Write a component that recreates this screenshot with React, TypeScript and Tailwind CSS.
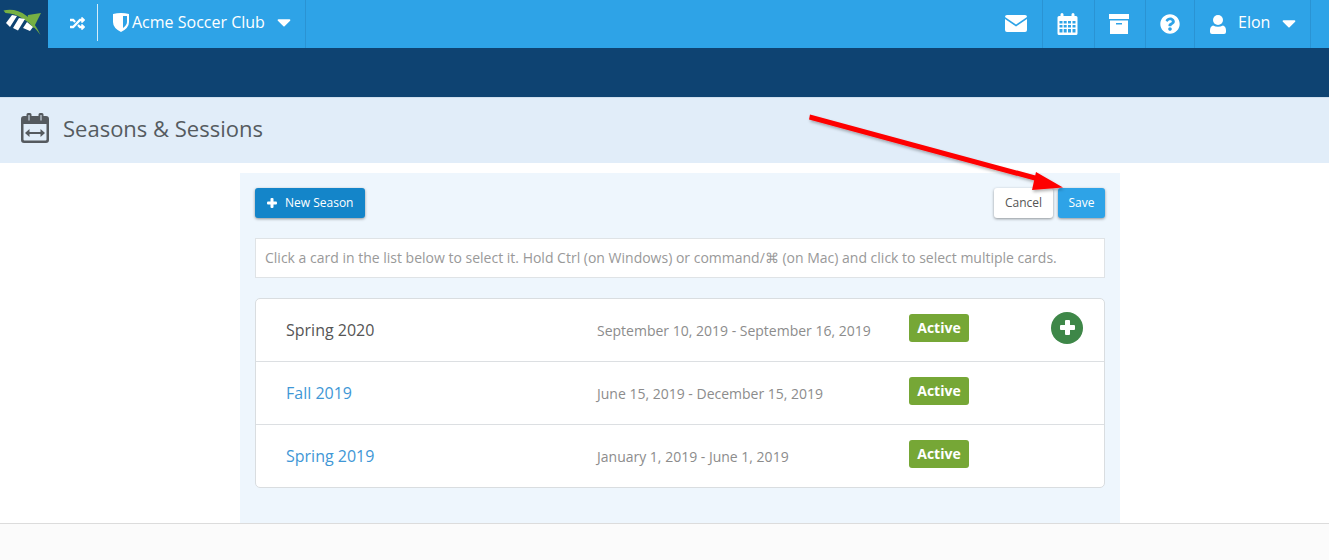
import React from "react";
import { FaRandom, FaCaretDown, FaQuestionCircle } from "react-icons/fa";

const Logo = () => (
  <svg width="48" height="48" viewBox="0 0 48 48">
    <path d="M3.500 10.500 C17 7.500 31 14 40.500 35 C31 22 17 13 5.500 13Z" fill="#76b043" />
    <path d="M28 15 L41 13 L33.500 28 L27 20Z" fill="#76b043" />
    <path d="M6 23 L12 15 L17 16 L10 27Z M13 28 L19 18 L25 19 L18 30.500Z M23 28 L27 22 L33 27 L30 31Z" fill="#fff" />
  </svg>
);

const Shield = () => (
  <svg width="16" height="19" viewBox="0 0 16 19">
    <path d="M0 1 Q8 -1 16 1 L16 9 Q16 15 8 19 Q0 15 0 9Z M10 3 L10 15 Q14 12 14 9 L14 3Z" fill="#fff" fillRule="evenodd" />
  </svg>
);

const Mail = () => (
  <svg width="22" height="17" viewBox="0 0 22 17">
    <path d="M2 0H20Q22 0 22 2L11 9.500L0 2Q0 0 2 0Z" fill="#fff" />
    <path d="M0 4L11 11.500L22 4V15Q22 17 20 17H2Q0 17 0 15Z" fill="#fff" />
  </svg>
);

const CalendarGrid = () => (
  <svg width="21" height="22" viewBox="0 0 20 22">
    <path fillRule="evenodd" fill="#fff" d="M3 3V1.500a1.500 1.500 0 0 1 3 0V3h8V1.500a1.500 1.500 0 0 1 3 0V3h1.500Q20 3 20 4.500v16Q20 22 18.500 22h-17Q0 22 0 20.500v-16Q0 3 1.500 3ZM2 8v2.500h3V8Zm4.200 0v2.500h3V8Zm4.300 0v2.500h3V8Zm4.500 0v2.500h3V8ZM2 12v2.500h3V12Zm4.200 0v2.500h3V12Zm4.300 0v2.500h3V12Zm4.500 0v2.500h3V12ZM2 16v3.500h3V16Zm4.200 0v3.500h3V16Zm4.300 0v3.500h3V16Zm4.500 0v3.500h3V16Z" />
  </svg>
);

const Box = () => (
  <svg width="20" height="20" viewBox="0 0 20 20">
    <path fillRule="evenodd" fill="#fff" d="M0 0H20V5H0ZM1 6.500H19V20H1ZM7 9V10.500H13V9Z" />
  </svg>
);

const User = () => (
  <svg width="16" height="19" viewBox="0 0 16 19">
    <circle cx="8" cy="5" r="5" fill="#fff" />
    <path d="M3 10.500Q8 13 13 10.500Q16 11.500 16 15.500V17Q16 19 14 19H2Q0 19 0 17V15.500Q0 11.500 3 10.500Z" fill="#fff" />
  </svg>
);

const Plus = ({ size, bar }: { size: number; bar: number }) => (
  <svg width={size} height={size} viewBox={`0 0 ${size} ${size}`}>
    <rect x={(size - bar) / 2} y="0" width={bar} height={size} rx="1" fill="#fff" />
    <rect x="0" y={(size - bar) / 2} width={size} height={bar} rx="1" fill="#fff" />
  </svg>
);

const SeasonIcon = () => (
  <svg width="28" height="30" viewBox="0 0 28 30" className="shrink-0">
    <path fillRule="evenodd" fill="#555a5f" d="M3 3H5.500V1.500a1.500 1.500 0 0 1 1.500-1.500h2a1.500 1.500 0 0 1 1.500 1.500V3H17.500V1.500a1.500 1.500 0 0 1 1.500-1.500h2a1.500 1.500 0 0 1 1.500 1.500V3H25Q28 3 28 6V27Q28 30 25 30H3Q0 30 0 27V6Q0 3 3 3ZM7.500 2V7.500H8.500V2ZM19.500 2V7.500H20.500V2ZM2.500 11V26.500Q2.500 27.500 3.500 27.500H24.500Q25.500 27.500 25.500 26.500V11Z" />
    <path d="M4 20L8.500 16V19H19.500V16L24 20L19.500 24V21H8.500V24Z" fill="#555a5f" />
  </svg>
);

const Arrow = () => (
  <svg className="absolute left-[800px] top-[105px] pointer-events-none" width="280" height="95" viewBox="800 105 280 95">
    <defs>
      <filter id="s" x="-5%" y="-20%" width="110%" height="140%">
        <feDropShadow dx="1" dy="2" stdDeviation="1.500" floodColor="#000" floodOpacity="0.3" />
      </filter>
    </defs>
    <g filter="url(#s)" fill="#fe0000">
      <path d="M810 114.500 L1041 177 L1040 182 L809 119.500Z" />
      <path d="M1036 172 L1063 187.500 L1032 190Z" />
    </g>
  </svg>
);

const Cell = ({ children, w }: { children: React.ReactNode; w: string }) => (
  <div className={`flex h-full items-center justify-center border-r border-[#2a93d3] ${w}`}>{children}</div>
);

const rows = [
  { name: "Spring 2020", dates: "September 10, 2019 - September 16, 2019", selected: true },
  { name: "Fall 2019", dates: "June 15, 2019 - December 15, 2019", selected: false },
  { name: "Spring 2019", dates: "January 1, 2019 - June 1, 2019", selected: false },
];

export default function App() {
  return (
    <div className="relative flex h-[560px] flex-col overflow-hidden bg-white font-['Open_Sans',sans-serif]">
      <header className="flex h-12 shrink-0 items-center bg-[#2ea3e7] text-white">
        <div className="flex h-full w-12 items-center justify-center bg-[#0e4372]">
          <Logo />
        </div>
        <div className="flex h-full w-[49px] items-center pl-[22px]">
          <div className="mt-[-1px]"><FaRandom size={15} /></div>
        </div>
        <div className="mb-1 h-[37px] w-px bg-white/80" />
        <div className="flex h-full w-[208px] items-center border-r border-[#2a93d3] pl-[15px]">
          <div className="mb-1 flex items-center">
            <Shield />
            <span className="ml-[3px] text-[16px] leading-none">Acme Soccer Club</span>
            <FaCaretDown size={22} className="ml-[8px] mt-[-1px]" />
          </div>
        </div>
        <div className="flex-1" />
        <div className="flex h-full items-center">
          <Cell w="w-[53px] pb-[1px]"><Mail /></Cell>
          <Cell w="w-[52px] pr-[2px]"><CalendarGrid /></Cell>
          <Cell w="w-[51px] pr-[2px]"><Box /></Cell>
          <Cell w="w-[49px]"><FaQuestionCircle size={20} /></Cell>
          <div className="flex h-full w-[116px] items-center border-r border-[#2a93d3] pl-[15px]">
            <User />
            <span className="mb-[4px] ml-[12px] text-[16px]">Elon</span>
            <FaCaretDown size={22} className="mb-[3px] ml-[8px]" />
          </div>
        </div>
        <div className="w-[18px]" />
      </header>
      <div className="h-[49px] shrink-0 bg-[#0e4372]" />
      <div className="flex h-[66px] shrink-0 items-center border-t border-[#cfdfee] bg-[#e1edf9] pb-[5px] pl-[21px]">
        <SeasonIcon />
        <h1 className="mb-px ml-[14px] text-[22px] leading-none font-normal text-[#555b60]">Seasons &amp; Sessions</h1>
      </div>
      <main className="flex h-[360px] shrink-0 justify-center pl-[31px] pt-[10px]">
        <div className="w-[880px] bg-[#eef6fd] px-[15px] pt-[15px]">
          <div className="flex items-center justify-between">
            <button className="flex h-[30px] w-[110px] items-center rounded-[3px] bg-[#1485c9] pl-[12px] text-[12px] text-white shadow-[0_1px_3px_rgba(0,0,0,0.4)]">
              <Plus size={10} bar={3} />
              <span className="ml-[8px]">New Season</span>
            </button>
            <div className="flex gap-[5px]">
              <button className="h-[30px] w-[59px] rounded-[3px] bg-white text-[12px] text-[#555] shadow-[0_1px_3px_rgba(0,0,0,0.4)]">Cancel</button>
              <button className="h-[30px] w-[47px] rounded-[3px] bg-[#2ea3e7] text-[12px] text-white shadow-[0_1px_3px_rgba(0,0,0,0.4)]">Save</button>
            </div>
          </div>
          <div className="mt-[20px] flex h-[40px] items-center border border-[#dfe3e6] bg-white pb-[2px] pl-[9px] text-[14px] text-[#999]">
            Click a card in the list below to select it. Hold Ctrl (on Windows) or command/⌘ (on Mac) and click to select multiple cards.
          </div>
          <div className="mt-[20px] overflow-hidden rounded-[5px] border border-[#d9dde0] bg-white">
            {rows.map((r, i) => (
              <div key={r.name} className={`flex items-center ${i > 0 ? "h-[63px] border-t border-[#dcdfe2]" : "h-[62px]"}`}>
                <div className={`ml-[30px] w-[311px] text-[16px] ${r.selected ? "text-[#555]" : "text-[#3f97d6]"}`}>{r.name}</div>
                <div className="w-[312px] pt-px text-[14px] text-[#8c8c8c]">{r.dates}</div>
                <div className="mb-[5px] flex h-[28px] w-[60px] items-center justify-center rounded-[3px] bg-[#76a736] text-[14px] font-bold text-white">Active</div>
                {r.selected && (
                  <div className="mb-[5px] ml-[82px] flex h-8 w-8 items-center justify-center rounded-full bg-[#3e8748]">
                    <Plus size={15} bar={5} />
                  </div>
                )}
              </div>
            ))}
          </div>
        </div>
      </main>
      <footer className="flex-1 border-t border-[#dcdcdc] bg-[#fbfbfb]" />
      <Arrow />
    </div>
  );
}
